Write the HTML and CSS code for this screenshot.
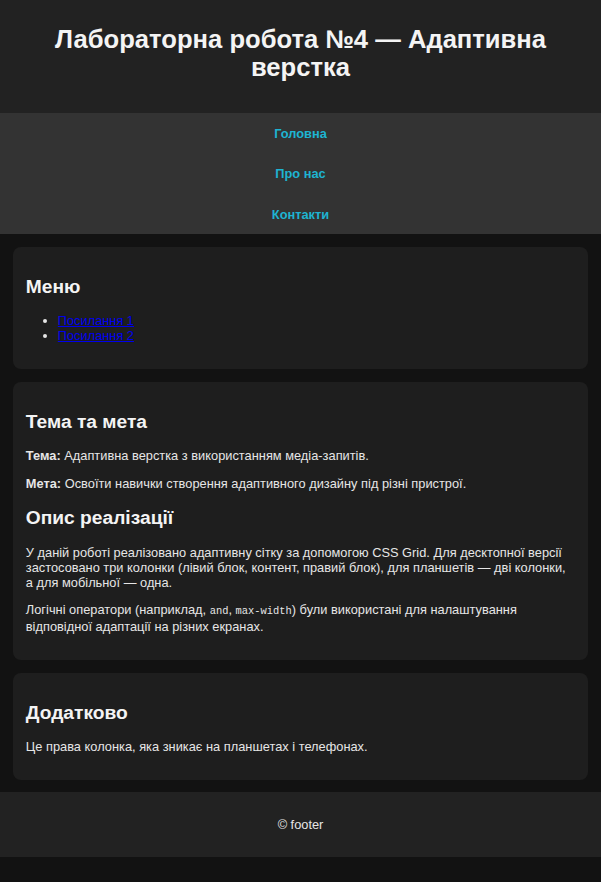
FILE: index.html
```html
<!DOCTYPE html>
<html lang="uk">
<head>
<meta charset="utf-8">
<title>Лабораторна робота №4</title>
<link rel="stylesheet" href="styles.css">
</head>
<body>
<header class="site-header">
  <h1 class="title">Лабораторна робота №4 — Адаптивна верстка</h1>
</header>
<nav class="site-nav">
  <a href="#">Головна</a>
  <a href="#">Про нас</a>
  <a href="#">Контакти</a>
</nav>
<main class="layout">
  <aside class="card">
    <h2>Меню</h2>
    <ul class="links">
      <li><a href="#">Посилання 1</a></li>
      <li><a href="#">Посилання 2</a></li>
    </ul>
  </aside>
  <section class="card">
    <h2>Тема та мета</h2>
    <p><strong>Тема:</strong> Адаптивна верстка з використанням медіа-запитів.</p>
    <p><strong>Мета:</strong> Освоїти навички створення адаптивного дизайну під різні пристрої.</p>
    <h2>Опис реалізації</h2>
    <p>У даній роботі реалізовано адаптивну сітку за допомогою CSS Grid. Для десктопної версії застосовано три колонки (лівий блок, контент, правий блок), для планшетів — дві колонки, а для мобільної — одна.</p>
    <p>Логічні оператори (наприклад, <code>and</code>, <code>max-width</code>) були використані для налаштування відповідної адаптації на різних екранах.</p>
  </section>
  <aside class="card">
    <h2>Додатково</h2>
    <p>Це права колонка, яка зникає на планшетах і телефонах.</p>
  </aside>
</main>
<footer class="site-footer">© footer</footer>
</body>
</html>
```
FILE: styles.css
```css
html, body {
  margin: 0;
  background: #121212;
}
body {
  font-family: "Liberation Sans", Arial, sans-serif;
  font-size: 12.8px;
  line-height: 15px;
  color: #e6e6e6;
}
.site-header {
  background: #222222;
  padding: 25px 20px 31px;
  text-align: center;
}
.title {
  margin: 0;
  font-size: 25.6px;
  line-height: 28.4px;
  color: #f4f4f4;
}
.site-nav {
  background: #333333;
  display: flex;
  flex-direction: column;
  align-items: center;
}
.site-nav a {
  display: block;
  padding: 12.75px 0;
  line-height: 15px;
  color: #1eb4d2;
  font-weight: bold;
  text-decoration: none;
}
.layout {
  display: grid;
  grid-template-columns: 1fr;
  gap: 13px;
  padding: 12.5px 13px 12px;
}
.card {
  background: #1e1e1e;
  border-radius: 8px;
  padding: 12.8px;
}
.card h2 {
  font-size: 19.2px;
  line-height: 21.6px;
  margin: 15.9px 0;
  color: #f4f4f4;
}
.card p {
  margin: 12.8px 0;
  letter-spacing: 0.015px;
}
.links {
  margin: 12.8px 0;
  padding-left: 32px;
  line-height: 15.3px;
}
.links a {
  color: #0000ee;
}
code {
  font-family: "Liberation Mono", "Courier New", monospace;
  font-size: 10.4px;
  letter-spacing: 0;
}
.site-footer {
  background: #222222;
  text-align: center;
  padding: 25px 20px;
}
```
